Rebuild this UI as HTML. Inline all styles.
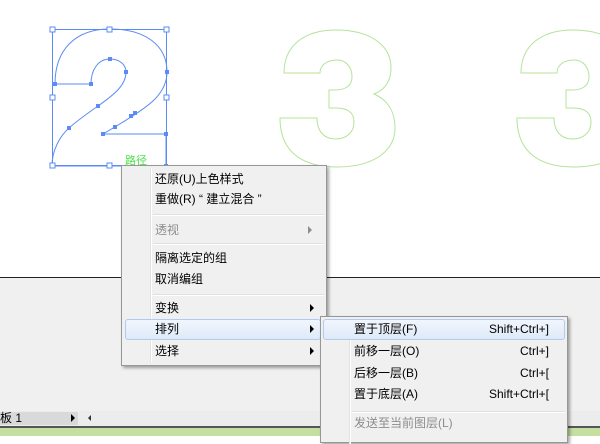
<!DOCTYPE html>
<html><head><style>
body{margin:0;width:600px;height:436px;overflow:hidden;position:relative;background:#fff;font-family:"Liberation Sans","Noto Sans CJK SC",sans-serif;font-size:12px;color:#000}
.a{position:absolute}
.menu{position:absolute;background:#f0f0f0;border:1px solid #979797;box-shadow:2px 2px 3px rgba(0,0,0,.35)}
.it{position:absolute;left:33px;height:20px;line-height:20px;white-space:nowrap}
.sep{position:absolute;height:1px;background:#e0e0e0;border-bottom:1px solid #fff}
.arr{position:absolute;width:0;height:0;border-left:4px solid #000;border-top:4px solid transparent;border-bottom:4px solid transparent}
.sc{position:absolute;right:18px;height:20px;line-height:20px}
</style></head><body>
<svg class="a" style="left:0;top:0" width="600" height="280">
<defs><path id="t" d="M284,73 C284,45 305,30 336,30 C370,30 391,45 391,68 C391,82 384,90 374,94 C388,100 395,112 395,128 C395,152 372,167 337,167 C300,167 280,150 280,118 L317,118 C317,132 325,139 335,139 C347,139 354,132 354,122 C354,112 347,108 336,108 L329,108 L329,90 L335,90 C345,90 352,86 352,77 C352,67 346,60 337,60 C327,60 320,65 320,73 Z"/></defs>
<use href="#t" fill="none" stroke="#b4e39a" stroke-width="1"/>
<use href="#t" x="237" fill="none" stroke="#b4e39a" stroke-width="1"/>
<path d="M52,166 C52,150 60,136 69,128 C78,120 88,113 98,106 C115,94 126,85 126,72 C126,65 120,59 110,59 C98,59 91,70 91,84 L55,84 C55,50 75,29 110,29 C145,29 167,45 167,72 C167,95 145,108 131,117 L115,127 L103,134 L166,134 L166,166 Z" fill="none" stroke="#5b8cf5" stroke-width="1"/>
<rect x="52.5" y="29.5" width="114" height="136" fill="none" stroke="#5b8cf5"/>
<g fill="#fff" stroke="#5b8cf5">
<rect x="50" y="27" width="5" height="5"/><rect x="107" y="27" width="5" height="5"/><rect x="164" y="27" width="5" height="5"/>
<rect x="50" y="95" width="5" height="5"/><rect x="164" y="95" width="5" height="5"/>
<rect x="50" y="163" width="5" height="5"/><rect x="107" y="163" width="5" height="5"/>
</g>
<g fill="#5b8cf5">
<rect x="53" y="82" width="4" height="4"/><rect x="89" y="82" width="4" height="4"/><rect x="108" y="57" width="4" height="4"/><rect x="124" y="70" width="4" height="4"/><rect x="165" y="70" width="4" height="4"/><rect x="96" y="104" width="4" height="4"/><rect x="67" y="126" width="4" height="4"/><rect x="129" y="114" width="4" height="4"/><rect x="133" y="111" width="4" height="4"/><rect x="113" y="125" width="4" height="4"/><rect x="101" y="132" width="4" height="4"/><rect x="164" y="132" width="4" height="4"/><rect x="164" y="164" width="4" height="4"/>
</g>
<text x="125" y="164" font-family="Noto Sans CJK SC" font-size="11" fill="#4be04b">路径</text>
</svg>
<div class="a" style="left:0;top:277px;width:600px;height:1px;background:#222"></div>
<div class="a" style="left:0;top:278px;width:600px;height:133px;background:#f0f0f0"></div>
<div class="a" style="left:0;top:411px;width:600px;height:15px;background:#ececec"></div>
<div class="a" style="left:0;top:412px;width:78px;height:13px;background:#d9d9d9;line-height:13px">板 1</div>
<div class="arr" style="left:71px;top:414px;"></div>
<div class="a" style="left:88px;top:415px;width:0;height:0;border-right:3px solid #333;border-top:3px solid transparent;border-bottom:3px solid transparent"></div>
<div class="a" style="left:0;top:426px;width:600px;height:2px;background:#555"></div>
<div class="a" style="left:0;top:428px;width:600px;height:8px;background:#c4dfa0"></div>

<div class="menu" style="left:121px;top:165px;width:204px;height:199px">
<div class="a" style="left:28px;top:2px;width:1px;height:194px;background:#e2e2e2;border-right:1px solid #fff"></div>
<div class="it" style="top:3px">还原(U)上色样式</div>
<div class="it" style="top:23px">重做(R) “ 建立混合 ”</div>
<div class="sep" style="left:31px;right:2px;top:48px"></div>
<div class="it" style="top:54px;color:#8d8d8d">透视</div><div class="arr" style="left:186px;top:60px;border-left-color:#8d8d8d"></div>
<div class="sep" style="left:31px;right:2px;top:77px"></div>
<div class="it" style="top:82px">隔离选定的组</div>
<div class="it" style="top:103px">取消编组</div>
<div class="sep" style="left:31px;right:2px;top:128px"></div>
<div class="it" style="top:132px">变换</div><div class="arr" style="left:188px;top:138px"></div>
<div class="a" style="left:3px;top:153px;width:194px;height:19px;border:1px solid #aecbf0;border-radius:3px;background:linear-gradient(#f1f6fd,#dfe9f8)"></div>
<div class="it" style="top:153px">排列</div><div class="arr" style="left:188px;top:159px"></div>
<div class="it" style="top:175px">选择</div><div class="arr" style="left:188px;top:181px"></div>
</div>

<div class="menu" style="left:320px;top:316px;width:246px;height:125px">
<div class="a" style="left:28px;top:2px;width:1px;height:125px;background:#e2e2e2;border-right:1px solid #fff"></div>
<div class="a" style="left:2px;top:2px;width:240px;height:19px;border:1px solid #aecbf0;border-radius:3px;background:linear-gradient(#f1f6fd,#dfe9f8)"></div>
<div class="it" style="top:2px">置于顶层(F)</div><div class="sc" style="top:2px">Shift+Ctrl+]</div>
<div class="it" style="top:24px">前移一层(O)</div><div class="sc" style="top:24px">Ctrl+]</div>
<div class="it" style="top:46px">后移一层(B)</div><div class="sc" style="top:46px">Ctrl+[</div>
<div class="it" style="top:67px">置于底层(A)</div><div class="sc" style="top:67px">Shift+Ctrl+[</div>
<div class="sep" style="left:31px;right:2px;top:94px"></div>
<div class="it" style="top:96px;color:#8d8d8d">发送至当前图层(L)</div>
</div>
</body></html>
